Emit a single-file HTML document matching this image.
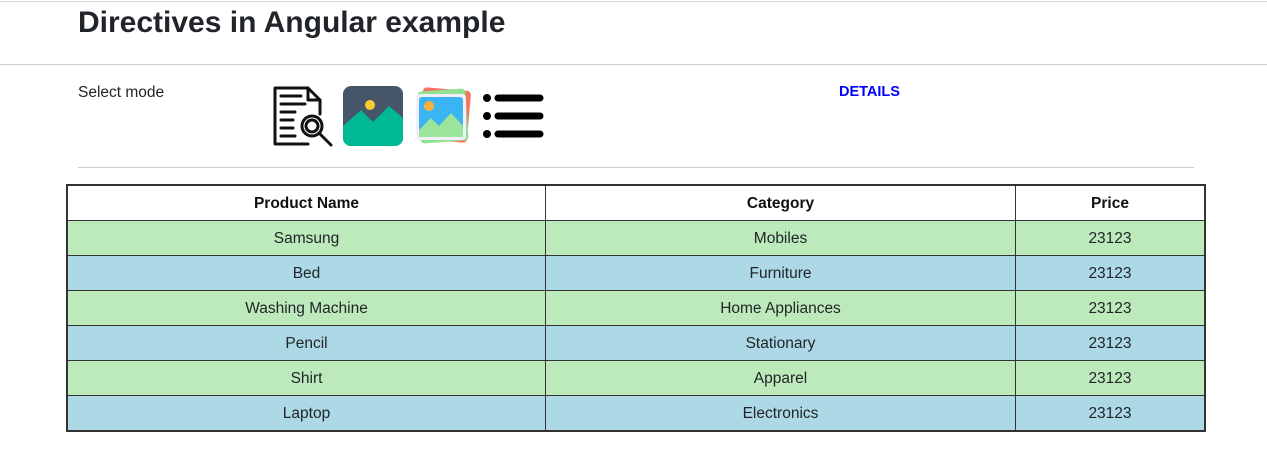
<!DOCTYPE html>
<html><head><meta charset="utf-8"><style>
html,body{margin:0;padding:0;background:#fff;width:1267px;height:472px;overflow:hidden;font-family:"Segoe UI","Liberation Sans",sans-serif;color:#212529}
.top{position:absolute;left:0;top:1px;width:1267px;height:1px;background:#d6d6d6}
h1{position:absolute;left:78px;top:3px;margin:0;font-size:30px;font-weight:600;line-height:40px}
.hr1{position:absolute;left:0;top:64px;width:1267px;height:1px;background:#ccc}
.sel{position:absolute;left:78px;top:84px;font-size:15.5px}
.det{position:absolute;left:839px;top:84px;font-size:14.5px;font-weight:700;color:#0000ff}
.hr2{position:absolute;left:78px;top:167px;width:1116px;height:1px;background:#ccc}
table{position:absolute;left:66px;top:184px;border-collapse:collapse;width:1140px;font-size:15.5px}
td,th{border:1px solid #333;height:33px;padding:1px 0 0 0;text-align:center}
th{background:#fff;font-weight:700;color:#111}
tr.g td{background:#bdeabb}
tr.b td{background:#add8e6}
table{border:2px solid #333}
.ic{position:absolute;top:86px}
</style></head><body>
<div class="top"></div>
<h1>Directives in Angular example</h1>
<div class="hr1"></div>
<div class="sel">Select mode</div>
<svg class="ic" style="left:272px" width="62" height="62" viewBox="0 0 62 62" fill="none" stroke="#111" stroke-width="3" stroke-linecap="round" stroke-linejoin="round">
<path d="M36 58H3V2h33l12 12v14"/><path d="M36 2v12h12"/>
<path d="M9 10h20M9 18h24M9 26h14M9 34h12M9 42h12M9 50h14"/>
<circle cx="40" cy="40" r="10"/><circle cx="40" cy="40" r="6"/><path d="M47 47l12 12"/></svg>
<svg class="ic" style="left:343px" width="60" height="60" viewBox="0 0 60 60">
<rect width="60" height="60" rx="8" fill="#475569"/>
<path d="M0 40L18 24L30 36L46 20L60 32V52a8 8 0 0 1-8 8H8a8 8 0 0 1-8-8Z" fill="#00b894"/>
<circle cx="27" cy="19" r="5" fill="#fdcb2e"/></svg>
<svg class="ic" style="left:413px" width="60" height="60" viewBox="0 0 60 60">
<rect x="8" y="3" width="48" height="52" rx="4" fill="#f87462" transform="rotate(5 32 29)"/>
<rect x="6" y="4" width="48" height="52" rx="4" fill="#8fe08f" transform="rotate(-4 30 30)"/>
<rect x="3" y="8" width="50" height="46" rx="4" fill="#f3effa"/>
<rect x="6" y="11" width="44" height="40" rx="3" fill="#3ab4f2"/>
<path d="M6 44L18 32L26 40L38 27L50 40V51H6Z" fill="#9be59a"/>
<circle cx="16" cy="20" r="5" fill="#fbb03b"/></svg>
<svg class="ic" style="left:480px" width="66" height="60" viewBox="0 0 66 60">
<circle cx="7" cy="12" r="4" fill="#000"/><circle cx="7" cy="30" r="4" fill="#000"/><circle cx="7" cy="48" r="4" fill="#000"/>
<path d="M18 12h42M18 30h42M18 48h42" stroke="#000" stroke-width="7" stroke-linecap="round"/></svg>
<div class="det">DETAILS</div>
<div class="hr2"></div>
<table>
<tr><th style="width:477px">Product Name</th><th style="width:469px">Category</th><th>Price</th></tr>
<tr class="g"><td>Samsung</td><td>Mobiles</td><td>23123</td></tr>
<tr class="b"><td>Bed</td><td>Furniture</td><td>23123</td></tr>
<tr class="g"><td>Washing Machine</td><td>Home Appliances</td><td>23123</td></tr>
<tr class="b"><td>Pencil</td><td>Stationary</td><td>23123</td></tr>
<tr class="g"><td>Shirt</td><td>Apparel</td><td>23123</td></tr>
<tr class="b"><td>Laptop</td><td>Electronics</td><td>23123</td></tr>
</table>
</body></html>
